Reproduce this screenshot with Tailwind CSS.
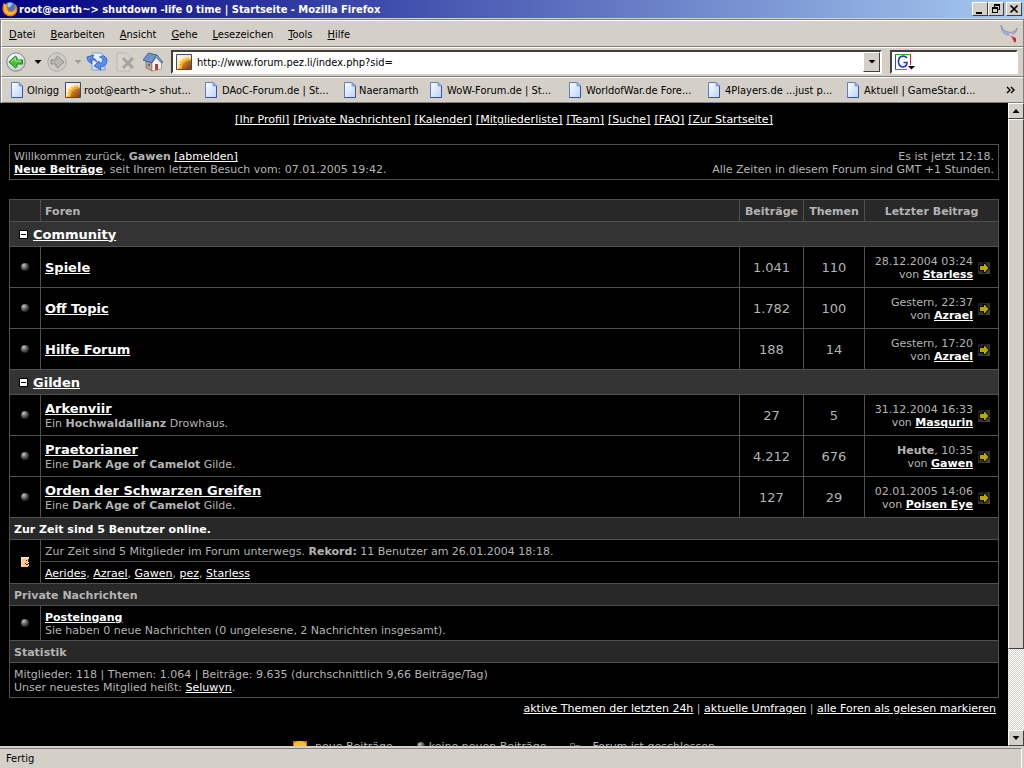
<!DOCTYPE html>
<html lang="de">
<head>
<meta charset="utf-8">
<title>root@earth~&gt; shutdown -life 0 time | Startseite</title>
<script src="https://cdn.jsdelivr.net/npm/@tailwindcss/browser@4"></script>
</head>
<body class="flex h-screen flex-col overflow-hidden bg-[#d4d0c8] font-['DejaVu_Sans_Condensed','DejaVu_Sans',sans-serif] text-[11px] leading-[13px] text-black">

<svg class="absolute h-0 w-0" aria-hidden="true">
  <defs>
    <linearGradient id="paper" x1="0" y1="0" x2="1" y2="1"><stop offset="0" stop-color="#fff"/><stop offset="1" stop-color="#b9d2fb"/></linearGradient>
    <linearGradient id="cream" x1="0" y1="0" x2="1" y2="1"><stop offset="0" stop-color="#fffbe8"/><stop offset="1" stop-color="#ffd070"/></linearGradient>
    <linearGradient id="sunfill" x1="0" y1="0" x2="1" y2="1"><stop offset="0" stop-color="#e89a40"/><stop offset="1" stop-color="#7c3c10"/></linearGradient>
    <linearGradient id="plate" x1="0" y1="0" x2="1" y2="1"><stop offset="0" stop-color="#181818"/><stop offset="1" stop-color="#484848"/></linearGradient>
    <radialGradient id="ball" cx=".35" cy=".3" r=".7"><stop offset="0" stop-color="#c8c8c8"/><stop offset=".45" stop-color="#6c6c6c"/><stop offset="1" stop-color="#202020"/></radialGradient>
    <radialGradient id="disc" cx=".4" cy=".3" r=".7"><stop offset="0" stop-color="#fff"/><stop offset="1" stop-color="#c9cbc8"/></radialGradient>
    <symbol id="doc" viewBox="0 0 12 16">
      <path d="M.5.5h7.500l3.500 3.500v11.500h-11z" fill="url(#paper)" stroke="#5b7fcb"/>
      <path d="M.5 15.500h11V4" fill="none" stroke="#3a559c"/>
      <path d="M8 .5V4h3.500z" fill="#8fb0f0" stroke="#6f92dc" stroke-width=".8"/>
    </symbol>
    <symbol id="sun" viewBox="0 0 16 16">
      <path d="M.5.5h15v15H.5z" fill="url(#cream)" stroke="#34506c"/>
      <path d="M15 4.500l-2 .5-.5-2.500-1.500 2.500-2-2v3L6 4.500 7 7.500l-4 0 2 2L2 11l2.500 1L2 15h13z" fill="#f9b020"/>
      <path d="M15 15H5.500q0-8 9.500-9z" fill="url(#sunfill)"/>
    </symbol>
    <symbol id="bullet" viewBox="0 0 8 8"><circle cx="4" cy="4" r="4" fill="url(#ball)"/></symbol>
    <symbol id="go" viewBox="0 0 12 12">
      <path d="M0 0h12v12H0z" fill="url(#plate)"/>
      <path d="M1 3h4V1h2l4.500 4.500v1L7 11H5V9H1z" fill="#000"/>
      <path d="M2 4h4V2h1l3.500 4L7 10H6V8H2z" fill="#b8aa00"/>
    </symbol>
    <symbol id="minus" viewBox="0 0 9 9"><path d="M0 0h9v9H0z" fill="#000"/><path d="M1 1h7v7H1z" fill="#fff"/><path d="M2 4h5v1H2z" fill="#000"/></symbol>
  </defs>
</svg>

<!-- Title bar -->
<header class="flex h-[18px] shrink-0 items-center bg-linear-to-r/srgb from-[#000082] to-[#a6caf0] pl-[2px] pr-[2px] text-white">
  <svg class="h-4 w-4 shrink-0" viewBox="0 0 16 16">
    <circle cx="8" cy="7.500" r="6.500" fill="#3f78d0"/>
    <path d="M5 3q3-2.500 6 0-2 .5-2 2t-3 1z" fill="#9fd0f5"/>
    <path d="M1.500 2l2 1.200L6 2.600 5.400 5 8 6.400 5.800 7.500Q6 10 9 10q3.500-.5 4-4.500l-.5-3Q15.500 5 15.500 8q-.5 6.500-7 7.500Q1 15 .5 8 .5 4.500 1.500 2z" fill="#ee7a16"/>
    <path d="M2 3l1.500 1.500L5 4 4 6.500 5 9q1.500 3 5 2.500 3-1 4-4 .5 5-5 6.500-5.500 0-7-5z" fill="#ffc02e"/>
  </svg>
  <h1 class="ml-px flex-1 truncate font-bold">root@earth~&gt; shutdown -life 0 time | Startseite - Mozilla Firefox</h1>
  <button aria-label="Minimieren" class="flex h-[14px] w-4 items-center justify-center border border-t-white border-l-white border-r-[#404040] border-b-[#404040] bg-[#d4d0c8]"><svg class="h-3 w-3" viewBox="0 0 12 12"><path d="M2 9h6v2H2z"/></svg></button>
  <button aria-label="Wiederherstellen" class="flex h-[14px] w-4 items-center justify-center border border-t-white border-l-white border-r-[#404040] border-b-[#404040] bg-[#d4d0c8]"><svg class="h-3 w-3" viewBox="0 0 12 12"><path d="M4 1h6v6H8V6h1V3H5v1H4zM2 4h6v6H2zM3 6v3h4V6z" fill-rule="evenodd"/></svg></button>
  <button aria-label="Schließen" class="ml-[2px] flex h-[14px] w-4 items-center justify-center border border-t-white border-l-white border-r-[#404040] border-b-[#404040] bg-[#d4d0c8]"><svg class="h-3 w-3" viewBox="0 0 12 12"><path d="M2.500 2.500l7 7m0-7l-7 7" stroke="#000" stroke-width="1.700"/></svg></button>
</header>

<div class="mt-px shrink-0 border-t border-r border-l border-[#808080]">
  <!-- Menu bar -->
  <nav class="flex h-[27px] items-center border-t border-b border-l border-t-white border-l-white border-b-[#808080] pl-[7px] pr-1">
    <div class="flex flex-1 gap-[15px] pt-px">
      <button><u>D</u>atei</button>
      <button><u>B</u>earbeiten</button>
      <button><u>A</u>nsicht</button>
      <button><u>G</u>ehe</button>
      <button><u>L</u>esezeichen</button>
      <button><u>T</u>ools</button>
      <button><u>H</u>ilfe</button>
    </div>
    <svg class="h-5 w-5" viewBox="0 0 20 20">
      <path d="M2 1q0 10 9 10 6 0 7-7-1 4-6 4.500Q4 8 2 1z" fill="#a9b2dc" stroke="#7f88b8" stroke-width=".8"/>
      <circle cx="12" cy="11" r="2.200" fill="#e8b4bc"/><path d="M12 12l3.500 6.500 1.500-.5v-4z" fill="#c03040"/>
    </svg>
  </nav>
  <!-- Navigation toolbar -->
  <div class="flex h-[30px] items-center border-t border-b border-l border-t-white border-l-white border-b-[#808080] pl-1 pr-[5px]">
    <button aria-label="Zurück"><svg class="h-5 w-5" viewBox="0 0 20 20"><circle cx="10" cy="10" r="9.200" fill="url(#disc)" stroke="#7d8592"/><path d="M3 10l6.500-6 1.500 1.500V8h5.500v4H11v2.500L9.500 16z" fill="#4cc03c" stroke="#17801a"/><path d="M5 10l4.500-4v3H15" fill="none" stroke="#a6ec8c"/></svg></button>
    <button aria-label="Verlauf zurück" class="ml-2"><svg class="h-2 w-2" viewBox="0 0 8 8"><path d="M.5 2h7L4 6z"/></svg></button>
    <button aria-label="Vor" class="ml-[5px]"><svg class="h-5 w-5" viewBox="0 0 20 20"><circle cx="10" cy="10" r="9.200" fill="#cfccc6" stroke="#aaa9a6"/><path d="M17 10l-6.500-6L9 5.500V8H4v4h5v2.500l1.500 1.500z" fill="#b9b7b2" stroke="#8c8b88"/></svg></button>
    <button aria-label="Verlauf vor" class="ml-[7px]"><svg class="h-2 w-2" viewBox="0 0 8 8"><path d="M.5 2h7L4 6z" fill="#a09d96"/></svg></button>
    <button aria-label="Neu laden" class="ml-[4px]"><svg class="h-[22px] w-[22px]" viewBox="0 0 22 22"><path d="M6 2h9l4 4v13H6z" fill="url(#paper)" stroke="#7c9ce0"/><path d="M1 6l7-2-1.500 2.500Q10 8 11 11q-3-3-6-2l1 3.500Q1 11 1 6z" fill="#5b8fef" stroke="#2a56bb" stroke-width=".8"/><path d="M21 8q0 8-7 8l1 3-7-4 5-5 .5 2.500Q17 12 17 9q-1-3-3.500-3Q18 3 21 8z" fill="#5b8fef" stroke="#2a56bb" stroke-width=".8"/></svg></button>
    <button aria-label="Stopp" class="ml-[8px]"><svg class="h-5 w-5" viewBox="0 0 20 20"><path d="M1 1h9l4 4v14H1z" fill="#d6d3cd" stroke="#bdbbb6"/><path d="M7 6l10 10M17 6L7 16" stroke="#a6a4a0" stroke-width="3"/></svg></button>
    <button aria-label="Startseite" class="ml-[7px]"><svg class="h-5 w-5" viewBox="0 0 20 20"><path d="M3 9l6 2v8l-6-3z" fill="#b9a890" stroke="#6c6258" stroke-width=".7"/><path d="M9 11l5-6 4.500 5v7L9 19z" fill="#f7f3ea" stroke="#8d8478" stroke-width=".7"/><path d="M0 8l5.500-7L14 3 8.500 11z" fill="#6d94cf" stroke="#34507e" stroke-width=".8"/><path d="M14 3l6 7.500-1.500.5L14 6" fill="#87a8da" stroke="#34507e" stroke-width=".8"/><path d="M12 12h3v6h-3z" fill="#c03c3c"/><path d="M5 12h2v2H5z" fill="#5a6a80"/></svg></button>
    <div class="ml-2 flex h-[24px] flex-1 items-center border-2 border-t-[#404040] border-l-[#404040] border-r-white border-b-white bg-white pl-[3px]">
      <svg class="h-4 w-4 shrink-0"><use href="#sun"/></svg>
      <input aria-label="Adresse" class="ml-[5px] h-full min-w-0 flex-1 pt-px outline-none" value="http://www.forum.pez.li/index.php?sid=">
      <button aria-label="Adressliste" class="flex h-full w-[17px] items-center justify-center border border-t-white border-l-white border-r-[#404040] border-b-[#404040] bg-[#d4d0c8]"><svg class="h-2 w-2" viewBox="0 0 8 8"><path d="M.5 2h7L4 5.500z"/></svg></button>
    </div>
    <div class="ml-2 flex h-[24px] w-[128px] items-center border-2 border-t-[#404040] border-l-[#404040] border-r-white border-b-white bg-white pl-[2px]">
      <button aria-label="Suchmaschine"><svg class="h-[18px] w-[22px]" viewBox="0 0 22 18"><path d="M1.500 1v15" stroke="#2050d0"/><path d="M1 1.500h15M1 16.500h12" stroke="#30a030"/><path d="M16.500 1v11" stroke="#e02020"/><path d="M13 5Q11.500 3 9 3 4.500 3.500 4.500 8.500T9 14q4-.5 4-4.500H9.500" fill="none" stroke="#1c3fc0" stroke-width="1.600"/><path d="M14 13h7l-3.500 3.500z"/></svg></button>
      <input aria-label="Suche" class="min-w-0 flex-1 outline-none">
    </div>
  </div>
  <!-- Bookmarks toolbar -->
  <nav class="flex h-[26px] items-center border-t border-b border-l border-t-white border-l-white border-b-[#808080] pl-[9px] pr-1">
    <a href="#" class="flex w-[54px] shrink-0 items-center gap-1"><svg class="h-4 w-3 shrink-0"><use href="#doc"/></svg>Olnigg</a>
    <a href="#" class="flex w-[140px] shrink-0 items-center gap-[3px]"><svg class="h-4 w-4 shrink-0"><use href="#sun"/></svg>root@earth~&gt; shut...</a>
    <a href="#" class="flex w-[139px] shrink-0 items-center gap-[5px]"><svg class="h-4 w-3 shrink-0"><use href="#doc"/></svg>DAoC-Forum.de | St...</a>
    <a href="#" class="flex w-[86px] shrink-0 items-center gap-[3px]"><svg class="h-4 w-3 shrink-0"><use href="#doc"/></svg>Naeramarth</a>
    <a href="#" class="flex w-[139px] shrink-0 items-center gap-[5px]"><svg class="h-4 w-3 shrink-0"><use href="#doc"/></svg>WoW-Forum.de | St...</a>
    <a href="#" class="flex w-[139px] shrink-0 items-center gap-[5px]"><svg class="h-4 w-3 shrink-0"><use href="#doc"/></svg>WorldofWar.de Fore...</a>
    <a href="#" class="flex w-[139px] shrink-0 items-center gap-[5px]"><svg class="h-4 w-3 shrink-0"><use href="#doc"/></svg>4Players.de ...just p...</a>
    <a href="#" class="flex flex-1 items-center gap-[5px] whitespace-nowrap"><svg class="h-4 w-3 shrink-0"><use href="#doc"/></svg>Aktuell | GameStar.d...</a>
    <button aria-label="Weitere Lesezeichen" class="px-1"><svg class="h-2 w-[9px]" viewBox="0 0 9 8"><path d="M1 1l3 3-3 3M5 1l3 3-3 3" fill="none" stroke="#000" stroke-width="1.400"/></svg></button>
  </nav>
</div>

<div class="flex min-h-0 flex-1 bg-black">
  <!-- Forum page -->
  <main class="min-w-0 flex-1 overflow-hidden px-[9px] pt-[10px] font-['DejaVu_Sans',sans-serif] text-[#b4b4b4]">
    <nav class="flex justify-center gap-1 whitespace-nowrap text-white underline">
      <a href="#">[Ihr Profil]</a>
      <a href="#">[Private Nachrichten]</a>
      <a href="#">[Kalender]</a>
      <a href="#">[Mitgliederliste]</a>
      <a href="#">[Team]</a>
      <a href="#">[Suche]</a>
      <a href="#">[FAQ]</a>
      <a href="#">[Zur Startseite]</a>
    </nav>

    <section class="mt-[18px] flex justify-between border border-[#505050] px-1 pt-[5px] pb-[3px]">
      <p>Willkommen zurück, <b>Gawen</b> <a href="#" class="text-white underline">[abmelden]</a><br><a href="#" class="font-bold text-white underline">Neue Beiträge</a>, seit Ihrem letzten Besuch vom: 07.01.2005 19:42.</p>
      <p class="text-right">Es ist jetzt 12:18.<br>Alle Zeiten in diesem Forum sind GMT +1 Stunden.</p>
    </section>

    <table class="mt-[19px] w-full table-fixed border-collapse [&_td]:border [&_td]:border-[#505050] [&_td]:px-1 [&_th]:border [&_th]:border-[#505050] [&_th]:px-1 [&_th]:pt-[2px]">
      <colgroup><col class="w-[31px]"><col><col class="w-[64px]"><col class="w-[61px]"><col class="w-[134px]"></colgroup>
      <thead>
        <tr class="h-[22px] bg-[#282828]"><th></th><th class="text-left">Foren</th><th>Beiträge</th><th>Themen</th><th>Letzter Beitrag</th></tr>
      </thead>
      <tbody>
        <tr class="h-[25px] bg-[#333]"><td colspan="5" class="pt-px"><div class="flex items-center gap-[5px] pl-[5px]"><button aria-label="Zuklappen"><svg class="h-[9px] w-[9px]"><use href="#minus"/></svg></button><a href="#" class="text-[13px] font-bold leading-4 text-white underline">Community</a></div></td></tr>
        <tr class="h-[41px]">
          <td><svg class="mx-auto h-2 w-2"><use href="#bullet"/></svg></td>
          <td class="pt-[2px]"><a href="#" class="text-[13px] font-bold leading-4 text-white underline">Spiele</a></td>
          <td class="text-center text-[13px]">1.041</td><td class="text-center text-[13px]">110</td>
          <td class="pt-[2px]"><div class="flex items-center justify-end gap-[5px] pr-1 text-right"><span>28.12.2004 03:24<br>von <a href="#" class="font-bold text-white underline">Starless</a></span><a href="#" aria-label="Letzter Beitrag"><svg class="h-3 w-3"><use href="#go"/></svg></a></div></td>
        </tr>
        <tr class="h-[41px]">
          <td><svg class="mx-auto h-2 w-2"><use href="#bullet"/></svg></td>
          <td class="pt-[2px]"><a href="#" class="text-[13px] font-bold leading-4 text-white underline">Off Topic</a></td>
          <td class="text-center text-[13px]">1.782</td><td class="text-center text-[13px]">100</td>
          <td class="pt-[2px]"><div class="flex items-center justify-end gap-[5px] pr-1 text-right"><span>Gestern, 22:37<br>von <a href="#" class="font-bold text-white underline">Azrael</a></span><a href="#" aria-label="Letzter Beitrag"><svg class="h-3 w-3"><use href="#go"/></svg></a></div></td>
        </tr>
        <tr class="h-[41px]">
          <td><svg class="mx-auto h-2 w-2"><use href="#bullet"/></svg></td>
          <td class="pt-[2px]"><a href="#" class="text-[13px] font-bold leading-4 text-white underline">Hilfe Forum</a></td>
          <td class="text-center text-[13px]">188</td><td class="text-center text-[13px]">14</td>
          <td class="pt-[2px]"><div class="flex items-center justify-end gap-[5px] pr-1 text-right"><span>Gestern, 17:20<br>von <a href="#" class="font-bold text-white underline">Azrael</a></span><a href="#" aria-label="Letzter Beitrag"><svg class="h-3 w-3"><use href="#go"/></svg></a></div></td>
        </tr>
        <tr class="h-[25px] bg-[#333]"><td colspan="5" class="pt-px"><div class="flex items-center gap-[5px] pl-[5px]"><button aria-label="Zuklappen"><svg class="h-[9px] w-[9px]"><use href="#minus"/></svg></button><a href="#" class="text-[13px] font-bold leading-4 text-white underline">Gilden</a></div></td></tr>
        <tr class="h-[41px]">
          <td><svg class="mx-auto h-2 w-2"><use href="#bullet"/></svg></td>
          <td><a href="#" class="block w-fit text-[13px] font-bold leading-4 text-white underline">Arkenviir</a>Ein <b>Hochwaldallianz</b> Drowhaus.</td>
          <td class="text-center text-[13px]">27</td><td class="text-center text-[13px]">5</td>
          <td class="pt-[2px]"><div class="flex items-center justify-end gap-[5px] pr-1 text-right"><span>31.12.2004 16:33<br>von <a href="#" class="font-bold text-white underline">Masqurin</a></span><a href="#" aria-label="Letzter Beitrag"><svg class="h-3 w-3"><use href="#go"/></svg></a></div></td>
        </tr>
        <tr class="h-[41px]">
          <td><svg class="mx-auto h-2 w-2"><use href="#bullet"/></svg></td>
          <td><a href="#" class="block w-fit text-[13px] font-bold leading-4 text-white underline">Praetorianer</a>Eine <b>Dark Age of Camelot</b> Gilde.</td>
          <td class="text-center text-[13px]">4.212</td><td class="text-center text-[13px]">676</td>
          <td class="pt-[2px]"><div class="flex items-center justify-end gap-[5px] pr-1 text-right"><span><b>Heute</b>, 10:35<br>von <a href="#" class="font-bold text-white underline">Gawen</a></span><a href="#" aria-label="Letzter Beitrag"><svg class="h-3 w-3"><use href="#go"/></svg></a></div></td>
        </tr>
        <tr class="h-[41px]">
          <td><svg class="mx-auto h-2 w-2"><use href="#bullet"/></svg></td>
          <td><a href="#" class="block w-fit text-[13px] font-bold leading-4 text-white underline">Orden der Schwarzen Greifen</a>Eine <b>Dark Age of Camelot</b> Gilde.</td>
          <td class="text-center text-[13px]">127</td><td class="text-center text-[13px]">29</td>
          <td class="pt-[2px]"><div class="flex items-center justify-end gap-[5px] pr-1 text-right"><span>02.01.2005 14:06<br>von <a href="#" class="font-bold text-white underline">Poisen Eye</a></span><a href="#" aria-label="Letzter Beitrag"><svg class="h-3 w-3"><use href="#go"/></svg></a></div></td>
        </tr>
        <tr class="h-[22px] bg-[#282828]"><th colspan="5" class="text-left text-white">Zur Zeit sind 5 Benutzer online.</th></tr>
        <tr class="h-[22px]">
          <td rowspan="2"><svg class="mx-auto h-[10px] w-2" viewBox="0 0 8 10"><path d="M0 0h8v10H0z" fill="#fbc68c"/><path d="M0 0h8v2H1v8H0z" fill="#ffe0b4"/><path d="M5 3h1v1H5zM7 2h1v3H7zM4 6h1v1H4zM7 6h1v1H7zM5 7h2v1H5zM7 9h1v1H7z" fill="#3a2010"/></svg></td>
          <td colspan="4" class="pt-[2px]">Zur Zeit sind 5 Mitglieder im Forum unterwegs. <b>Rekord:</b> 11 Benutzer am 26.01.2004 18:18.</td>
        </tr>
        <tr class="h-[22px]"><td colspan="4" class="pt-[2px]"><a href="#" class="text-white underline">Aerides</a>, <a href="#" class="text-white underline">Azrael</a>, <a href="#" class="text-white underline">Gawen</a>, <a href="#" class="text-white underline">pez</a>, <a href="#" class="text-white underline">Starless</a></td></tr>
        <tr class="h-[22px] bg-[#282828]"><th colspan="5" class="text-left">Private Nachrichten</th></tr>
        <tr class="h-[35px]">
          <td><svg class="mx-auto h-2 w-2"><use href="#bullet"/></svg></td>
          <td colspan="4" class="pt-[2px]"><a href="#" class="font-bold text-white underline">Posteingang</a><br>Sie haben 0 neue Nachrichten (0 ungelesene, 2 Nachrichten insgesamt).</td>
        </tr>
        <tr class="h-[22px] bg-[#282828]"><th colspan="5" class="text-left">Statistik</th></tr>
        <tr class="h-[35px]"><td colspan="5" class="pt-[2px]">Mitglieder: 118 | Themen: 1.064 | Beiträge: 9.635 (durchschnittlich 9,66 Beiträge/Tag)<br>Unser neuestes Mitglied heißt: <a href="#" class="text-white underline">Seluwyn</a>.</td></tr>
      </tbody>
    </table>

    <p class="mt-1 pr-[3px] text-right"><a href="#" class="text-white underline">aktive Themen der letzten 24h</a> | <a href="#" class="text-white underline">aktuelle Umfragen</a> | <a href="#" class="text-white underline">alle Foren als gelesen markieren</a></p>

    <!-- Legend -->
    <div class="mt-[25px] flex justify-center gap-6 whitespace-nowrap">
      <span class="flex gap-2"><svg class="h-[14px] w-[14px]" viewBox="0 0 14 14"><path d="M0 1h14v13H0z" fill="#c46a08"/><path d="M1 3q6-4 12 0v9H1z" fill="#ffbf20"/><circle cx="7" cy="8" r="3.500" fill="#d8c890"/></svg>neue Beiträge</span>
      <span class="flex gap-1"><svg class="mt-[2px] h-2 w-2"><use href="#bullet"/></svg>keine neuen Beiträge</span>
      <span class="flex gap-3"><svg class="mt-[3px] h-[10px] w-[10px]" viewBox="0 0 10 10"><path d="M.5 9.500v-9h4v2h5v7z" fill="#181818" stroke="#666"/></svg>Forum ist geschlossen</span>
    </div>
  </main>

  <!-- Vertical scrollbar -->
  <div class="flex w-4 shrink-0 flex-col bg-[repeating-conic-gradient(#fff_0_25%,#d4d0c8_0_50%)] bg-size-[2px_2px]">
    <button aria-label="Nach oben" class="flex h-4 items-center justify-center border border-t-white border-l-white border-r-[#404040] border-b-[#404040] bg-[#d4d0c8]"><svg class="h-2 w-2" viewBox="0 0 8 8"><path d="M.5 6h7L4 2z"/></svg></button>
    <div class="grow-[530] border border-t-white border-l-white border-r-[#404040] border-b-[#404040] bg-[#d4d0c8]"></div>
    <div class="grow-[81]"></div>
    <button aria-label="Nach unten" class="flex h-4 items-center justify-center border border-t-white border-l-white border-r-[#404040] border-b-[#404040] bg-[#d4d0c8]"><svg class="h-2 w-2" viewBox="0 0 8 8"><path d="M.5 2h7L4 6z"/></svg></button>
  </div>
</div>

<!-- Status bar -->
<footer class="shrink-0 pt-[2px] pr-[2px]">
  <div class="flex h-5 items-center border-t border-r border-t-[#808080] border-r-white pl-[6px]">Fertig</div>
</footer>
</body>
</html>
